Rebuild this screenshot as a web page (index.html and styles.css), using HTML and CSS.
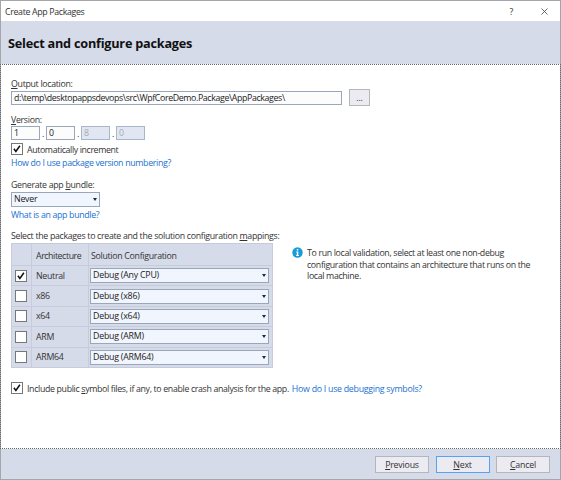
FILE: index.html
```html
<!DOCTYPE html>
<html lang="en">
<head>
<meta charset="utf-8">
<title>Create App Packages</title>
<link rel="stylesheet" href="styles.css">
</head>
<body>
<div class="dialog">
  <div class="titlebar">
    <span class="caption">Create App Packages</span>
    <span class="help">?</span>
    <svg class="close" width="7" height="7" viewBox="0 0 7 7"><path d="M.5.5l6 6M6.5.5l-6 6"/></svg>
  </div>
  <header><h1>Select and configure packages</h1></header>
  <main>
    <div class="label output"><u>O</u>utput location:</div>
    <div class="path-row"><div class="input path"><span>d:\temp\desktopappsdevops\src\WpfCoreDemo.Package\AppPackages\</span></div><div class="button browse">...</div></div>
    <div class="label version"><u>V</u>ersion:</div>
    <div class="version-row">
      <div class="input num">1</div><i>.</i><div class="input num">0</div><i>.</i><div class="input num off">8</div><i>.</i><div class="input num off">0</div>
    </div>
    <div class="check-row auto"><div class="box"><svg viewBox="0 0 9 9"><path d="M1.7 4.3L3.5 6.7 7.1 1.6"/></svg></div><span class="auto-text">Automatically increment</span></div>
    <div class="label link numbering">How do I use package version numbering?</div>
    <div class="label generate">Generate app <u>b</u>undle:</div>
    <div class="combo never">Never<b></b></div>
    <div class="label link what">What is an app bundle?</div>
    <div class="label select">Select the packages to create and the solution configuration <u>m</u>appings:</div>
    <div class="mapping">
      <div class="table">
        <div class="cell head"></div><div class="cell head arch-head">Architecture</div><div class="cell head">Solution Configuration</div>
        <div class="cell mark"><div class="box"><svg viewBox="0 0 9 9"><path d="M1.7 4.3L3.5 6.7 7.1 1.6"/></svg></div></div><div class="cell">Neutral</div><div class="cell"><div class="combo">Debug (Any CPU)<b></b></div></div>
        <div class="cell mark"><div class="box"></div></div><div class="cell">x86</div><div class="cell"><div class="combo">Debug (x86)<b></b></div></div>
        <div class="cell mark"><div class="box"></div></div><div class="cell">x64</div><div class="cell"><div class="combo">Debug (x64)<b></b></div></div>
        <div class="cell mark"><div class="box"></div></div><div class="cell">ARM</div><div class="cell"><div class="combo">Debug (ARM)<b></b></div></div>
        <div class="cell mark"><div class="box"></div></div><div class="cell">ARM64</div><div class="cell"><div class="combo">Debug (ARM64)<b></b></div></div>
      </div>
      <div class="info">
        <svg width="11" height="11" viewBox="0 0 11 11"><circle cx="5.5" cy="5.5" r="5.2" fill="#169bdc"/><path d="M4.8 2h1.5v1.4H4.8zM4.2 4.4h2.1v3.7h.6v.8H4.2v-.8h.6V5.2h-.6z" fill="#fff"/></svg>
        <p>To run local validation, select at least one non-debug<br>configuration that contains an architecture that runs on the<br>local machine.</p>
      </div>
    </div>
    <div class="check-row symbols"><div class="box"><svg viewBox="0 0 9 9"><path d="M1.7 4.3L3.5 6.7 7.1 1.6"/></svg></div><span class="sym-text">Include public <u>s</u>ymbol files, if any, to enable crash analysis for the app.</span><span class="link">How do I use debugging symbols?</span></div>
  </main>
  <footer><div class="button"><span><u>P</u>revious</span></div><div class="button next"><span><u>N</u>ext</span></div><div class="button"><span><u>C</u>ancel</span></div></footer>
</div>
</body>
</html>
```
FILE: styles.css
```css
* { box-sizing: border-box; }
body { margin: 0; font: 8.8px/12px "Open Sans", "Noto Sans", sans-serif; letter-spacing: -0.31px; color: #333; background: #fff; overflow: hidden; white-space: nowrap; }
u { text-decoration-thickness: 1px; text-underline-offset: 1px; }
.dialog { width: 561px; height: 480px; border: 1px solid #a5a6ab; display: flex; flex-direction: column; }
.titlebar { height: 20px; display: flex; align-items: center; padding: 1px 12px 0 4px; }
.caption { flex: 1; letter-spacing: -0.33px; }
.help { margin-right: 28px; }
.close { stroke: #444; stroke-width: .8; fill: none; }
header { height: 43px; background: #d6dbe9; display: flex; align-items: center; padding: 1px 0 0 7px; }
h1 { margin: 0; font-size: 12.7px; line-height: 18px; letter-spacing: -0.23px; color: #111; }
main { height: 385px; margin: 0 -1px; border: 1px dotted #666; padding: 13px 0 0 10px; }
.label { height: 12px; }
.link { color: #2071cf; }
.numbering, .what { letter-spacing: -0.33px; }
.input, .combo { border: 1px solid #9aa7b9; background: #fcfcfd; color: #222; padding-left: 2px; }
.input { height: 14px; line-height: 12px; }
.path-row { display: flex; align-items: center; gap: 7px; height: 17px; }
.path { width: 331px; letter-spacing: -0.37px; }
.button { width: 54px; height: 17px; border: 1px solid #b5b6bb; background: #ecebf1; display: flex; align-items: center; justify-content: center; letter-spacing: -0.2px; }
.browse { width: 21px; }
.output { margin-bottom: -1px; }
.version { margin-top: 8px; }
.version-row { display: flex; height: 14px; }
.num { width: 29px; }
.version-row i { width: 6px; padding-left: 2px; font-style: normal; line-height: 16px; }
.off { background: #e1e7f2; color: #aaa; border-color: #a8b6cc; }
.check-row { display: flex; align-items: center; height: 12px; }
.box { width: 12px; height: 12px; border: 1px solid #777; background: #fff; flex: none; }
.box svg { display: block; width: 10px; height: 10px; fill: none; stroke: #111; stroke-width: 1.4; }
.auto { margin-top: 3px; gap: 4px; }
.auto-text, .sym-text { position: relative; top: 1px; }
.auto-text { letter-spacing: -0.38px; }
.sym-text { letter-spacing: -0.34px; }
.numbering { margin-top: 2px; }
.generate { margin-top: 10px; }
.combo { height: 15px; background: #f1f5fd; line-height: 13px; display: flex; justify-content: space-between; align-items: center; padding-right: 2px; letter-spacing: -0.22px; }
.combo b { border: 2.2px solid transparent; border-top: 3px solid #1b293e; border-bottom: 0; }
.never { width: 89px; margin-top: 1px; }
.what { margin-top: 2px; }
.select { margin-top: 9px; }
.mapping { display: flex; gap: 19px; margin-top: 1px; }
.table { display: grid; width: 262px; height: 125px; grid-template-columns: 19px 56px 1fr; grid-template-rows: 21px repeat(5, 1fr); gap: 1px; padding: 1px; background: #c8cbdc; letter-spacing: -0.3px; }
.cell { background: #d6dbe9; display: flex; align-items: center; padding-left: 4px; min-height: 0; }
.head { padding-top: 2px; }
.arch-head { letter-spacing: -0.42px; }
.cell:nth-child(3n) { padding-right: 3px; padding-left: 2px; }
.cell:nth-child(3n):not(.head) { padding-left: 1px; }
.cell.mark { padding-left: 3px; }
.cell .combo { width: 100%; }
.info { display: flex; padding-top: 4px; gap: 4px; letter-spacing: -0.34px; }
.info p { margin: 0; line-height: 11.5px; padding-top: 1px; }
.symbols { margin-top: 14px; gap: 4px; }
.symbols .link { position: relative; top: 1px; margin-left: -1px; letter-spacing: -0.27px; }
footer { flex: 1; background: #d6dbe9; display: flex; align-items: center; justify-content: flex-end; gap: 6.5px; padding: 1px 10px 0 0; }
.next { border: 1px solid #55a3f5; }
```
